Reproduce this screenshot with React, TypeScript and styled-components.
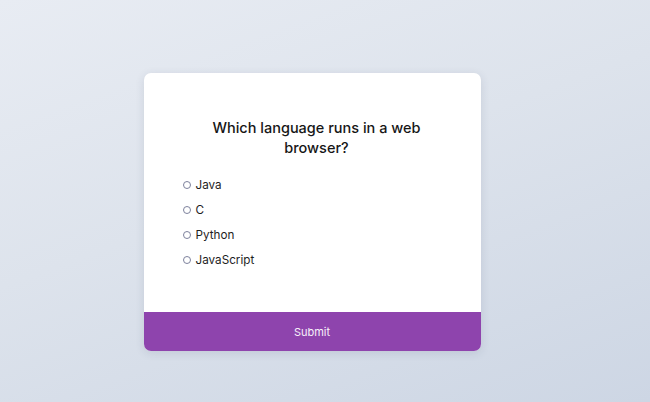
import React from "react";
import styled, { createGlobalStyle } from "styled-components";

const Global = createGlobalStyle`
  html, body { margin: 0; padding: 0; }
  body {
    font-family: "Inter", "Noto Sans", sans-serif;
    background: linear-gradient(160deg, #e8ecf3 0%, #dde3ec 45%, #cdd6e4 100%);
    min-height: 402px;
  }
`;

const Page = styled.div`
  width: 650px;
  height: 402px;
  box-sizing: border-box;
  padding: 22px 26px 0 0;
  display: flex;
  align-items: center;
  justify-content: center;
`;

const Card = styled.div`
  width: 337px;
  height: 278px;
  background: #ffffff;
  border-radius: 7px;
  box-shadow: 0 2px 10px rgba(40, 50, 80, 0.12);
  overflow: hidden;
  display: flex;
  flex-direction: column;
`;

const Body = styled.div`
  flex: 1;
  padding: 45px 30px 0 39px;
`;

const Title = styled.h2`
  margin: 0 auto 18px;
  max-width: 210px;
  text-align: center;
  font-size: 14.5px;
  line-height: 20px;
  font-weight: 500;
  color: #161616;
`;

const Options = styled.ul`
  list-style: none;
  margin: 0;
  padding: 0;
  display: flex;
  flex-direction: column;
  gap: 8px;
`;

const Option = styled.li`
  display: flex;
  align-items: center;
  height: 17px;
  font-size: 11.7px;
  color: #1e1e1e;
`;

const Radio = styled.span`
  width: 6px;
  height: 6px;
  border: 1px solid #7d819c;
  border-radius: 50%;
  margin-right: 5px;
  flex-shrink: 0;
`;

const Submit = styled.button`
  height: 39px;
  border: none;
  background: #8e44ad;
  color: #f7f0fa;
  font-family: inherit;
  font-size: 11px;
  cursor: pointer;
`;

const options = ["Java", "C", "Python", "JavaScript"];

export default function App() {
  return (
    <>
      <Global />
      <Page>
        <Card>
          <Body>
            <Title>Which language runs in a web browser?</Title>
            <Options>
              {options.map((o) => (
                <Option key={o}>
                  <Radio />
                  {o}
                </Option>
              ))}
            </Options>
          </Body>
          <Submit>Submit</Submit>
        </Card>
      </Page>
    </>
  );
}
